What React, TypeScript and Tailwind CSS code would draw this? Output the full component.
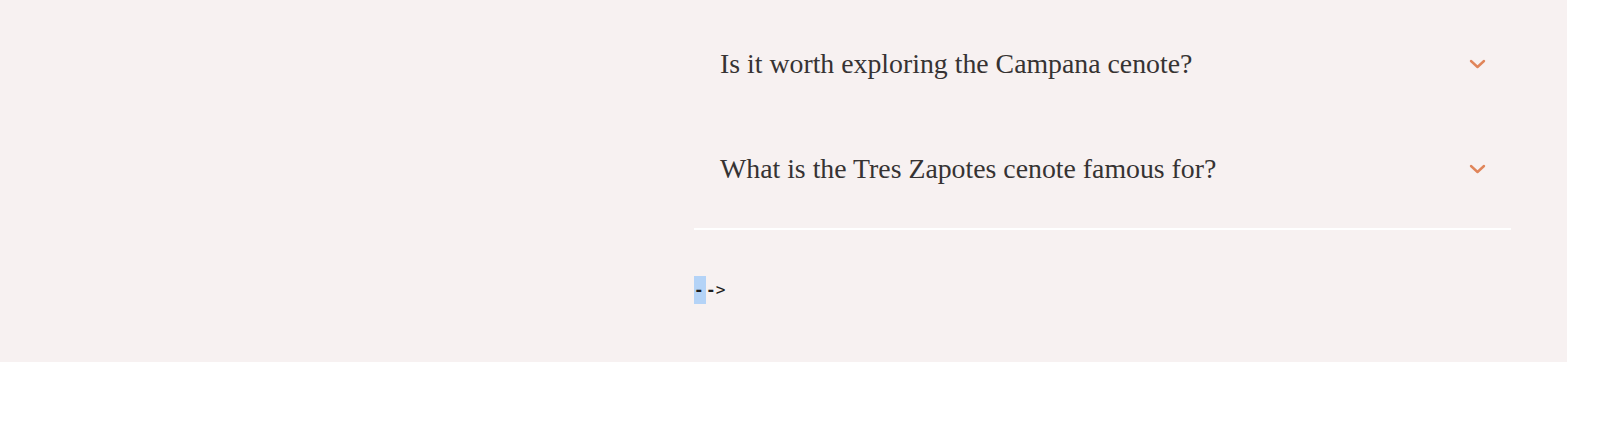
import React from 'react';

const faqs = [
  'Is it worth exploring the Campana cenote?',
  'What is the Tres Zapotes cenote famous for?',
];

const Chevron: React.FC = () => (
  <svg width="17" height="10" viewBox="0 0 17 10" fill="none" className="text-[#e0855a]">
    <path d="M2 2l6.5 6 6.5-6" stroke="currentColor" strokeWidth="2.4" strokeLinecap="round" strokeLinejoin="round" />
  </svg>
);

const App: React.FC = () => {
  return (
    <div className="w-[1600px] h-[437px] bg-white">
      <section className="w-[1567px] h-[362px] bg-[#f7f1f1] flex">
        {/* left column is empty in this view */}
        <div className="w-[694px] shrink-0" />

        <div className="w-[817px] pt-[11px]">
          <div className="border-b-2 border-white pb-[7px]">
            {faqs.map((q) => (
              <button
                key={q}
                className="w-full h-[105px] flex items-center justify-between pl-[26px] pr-[25px] text-left"
              >
                <span className="font-['Liberation_Serif',serif] text-[27.8px] text-[#363333] leading-none">{q}</span>
                <Chevron />
              </button>
            ))}
          </div>

          <div className="mt-[46px] h-[28px] flex items-center font-['DejaVu_Sans_Mono',monospace] text-[16px] text-[#1f1f1f]">
            <span className="bg-[#b4d3f7] h-[28px] w-[12px] flex items-center font-bold">-</span>
            <span className="font-bold">-</span>
            <span>&gt;</span>
          </div>
        </div>
      </section>
    </div>
  );
};

export default App;
